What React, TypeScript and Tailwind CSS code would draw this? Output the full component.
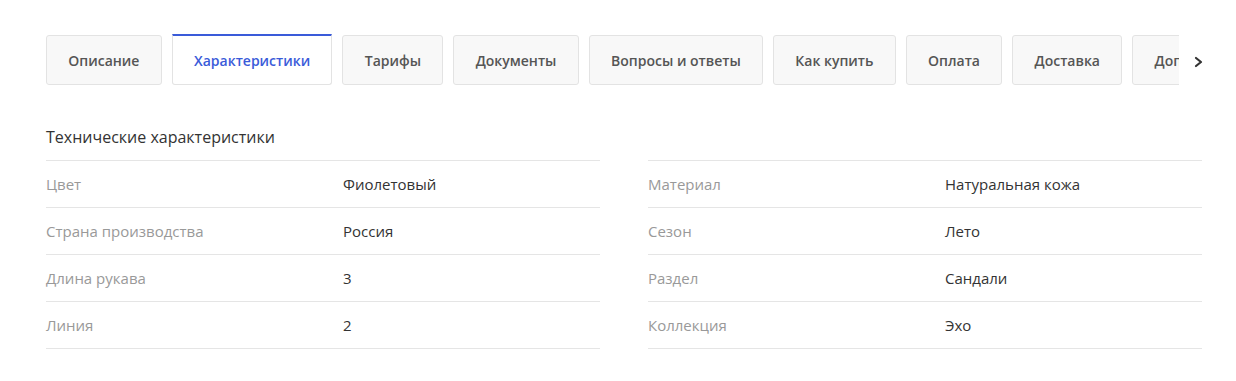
const tabs = [
    "Описание",
    "Характеристики",
    "Тарифы",
    "Документы",
    "Вопросы и ответы",
    "Как купить",
    "Оплата",
    "Доставка",
    "Дополнительно",
];

const leftSpecs = [
    ["Цвет", "Фиолетовый"],
    ["Страна производства", "Россия"],
    ["Длина рукава", "3"],
    ["Линия", "2"],
];

const rightSpecs = [
    ["Материал", "Натуральная кожа"],
    ["Сезон", "Лето"],
    ["Раздел", "Сандали"],
    ["Коллекция", "Эхо"],
];

function SpecTable({ rows }: { rows: string[][] }) {
    return (
        <div className="border-t border-[#e5e5e5]">
            {rows.map(([label, value]) => (
                <div key={label} className="flex h-[47px] items-center border-b border-[#e5e5e5] text-[15px]">
                    <div className="w-[297px] shrink-0 text-[#999999]">{label}</div>
                    <div className="text-[#333333]">{value}</div>
                </div>
            ))}
        </div>
    );
}

export default function App() {
    return (
        <div className="min-h-[381px] bg-white pt-[34px] pr-[34px] pl-[46px] font-['Open_Sans',sans-serif]">
            {/* Tabs */}
            <div className="flex items-end">
                <div className="flex w-[1133px] shrink-0 gap-[10px] overflow-hidden">
                    {tabs.map((tab, i) =>
                        i === 1 ? (
                            <div
                                key={tab}
                                className="flex h-[51px] shrink-0 items-center rounded-b-[3px] border border-t-2 border-[#e3e3e3] border-t-[#3a5bd9] bg-white px-[21.3px] text-[14px] font-semibold text-[#3a5bd9]"
                            >
                                {tab}
                            </div>
                        ) : (
                            <div
                                key={tab}
                                className="mt-[1px] flex h-[50px] shrink-0 items-center rounded-[3px] border border-[#e3e3e3] bg-[#f8f8f8] px-[21.3px] text-[14px] font-semibold text-[#555555]"
                            >
                                {tab}
                            </div>
                        )
                    )}
                </div>
                <div className="flex h-[50px] flex-1 items-center justify-end pt-[4px]">
                    <svg width="9" height="12" viewBox="0 0 9 12" fill="none" className="-mr-[1px]">
                        <polyline points="2,2 7,6 2,10" stroke="#333333" strokeWidth="2.2" strokeLinecap="round" strokeLinejoin="round" />
                    </svg>
                </div>
            </div>

            {/* Specs */}
            <h3 className="mt-[40px] mb-[11px] text-[16px] leading-6 text-[#333333]">Технические характеристики</h3>
            <div className="grid grid-cols-2 gap-[48px]">
                <SpecTable rows={leftSpecs} />
                <SpecTable rows={rightSpecs} />
            </div>
        </div>
    );
}
